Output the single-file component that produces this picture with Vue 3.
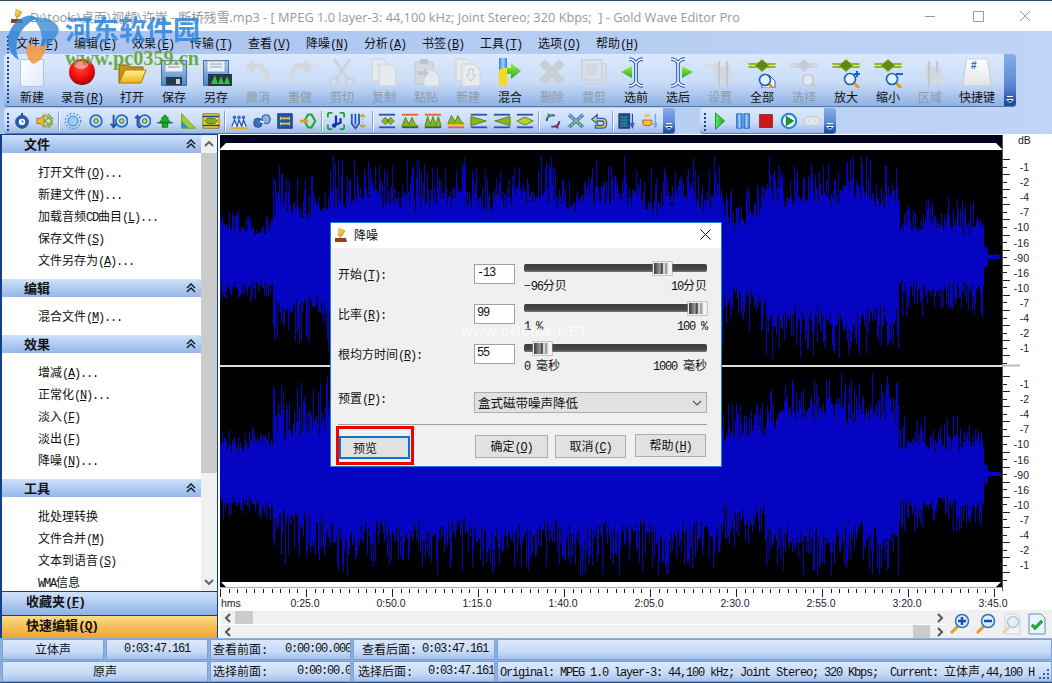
<script setup>
import { h } from 'vue'

// text helper: ascii runs get half-width advance like the bitmap font, (X) is underlined
const T = (props) => {
  const parts = props.t.split(/([\x20-\x7e]+)/).filter(Boolean).map((s) => {
    if (!/^[\x20-\x7e]/.test(s)) return s
    const m = s.match(/^(.*\()([A-Z])(\).*)$/)
    return h('span', { class: 'lat' }, m ? [m[1], h('u', m[2]), m[3]] : s)
  })
  return h('span', parts)
}
T.props = ['t']

const title = 'D:\\tools\\桌面\\视频\\许嵩 - 断桥残雪.mp3 - [ MPEG 1.0 layer-3: 44,100 kHz; Joint Stereo; 320 Kbps;  ] - Gold Wave Editor Pro'
const menus = ['文件(F)', '编辑(E)', '效果(E)', '传输(T)', '查看(V)', '降噪(N)', '分析(A)', '书签(B)', '工具(T)', '选项(O)', '帮助(H)']

const page = (x, y, w, ht, f = '#e6e9ee', s = '#ccd1d8') => `<path d="M${x} ${y}h${w - 6}l6 6v${ht - 6}h-${w}z" fill="${f}" stroke="${s}"/>`
const bars = (c = '#8db52a', d = '#5f8a12') => `<path d="M2.500 8h27M2.500 11h27" stroke="${c}" stroke-width="2.200"/><path d="M16 3.500l7 6-7 6-7-6z" fill="${d}" stroke="${c}"/>`
const mag = (cx, cy, inner = '') => `<path d="M${cx + 4} ${cy + 4}l5 5" stroke="#e59a1c" stroke-width="3"/><circle cx="${cx}" cy="${cy}" r="5.500" fill="#dff0ff" stroke="#1c62b8" stroke-width="1.600"/>${inner}`
const ibeam = '<path d="M9 3c3 0 5 1 7 4 2-3 4-4 7-4M16 7v19M9 30c3 0 5-1 7-4 2 3 4 4 7 4" fill="none" stroke="#1a4fc4" stroke-width="3.600"/><path d="M9 3c3 0 5 1 7 4 2-3 4-4 7-4M16 7v19M9 30c3 0 5-1 7-4 2 3 4 4 7 4" fill="none" stroke="#fff" stroke-width="1.500"/>'
const grayGrid = '<path d="M11 10h16v16H11z" fill="#d3d8de"/><path d="M15 5v26M23 5v26" stroke="#c2c8cf" stroke-width="2"/>'

const big = {
  new: '<path d="M4.500 3.500h23v27h-23z" fill="url(#gPage)" stroke="#a6c6ee"/>',
  rec: '<circle cx="16" cy="16" r="13" fill="url(#gRec)"/><ellipse cx="15" cy="9" rx="7" ry="4" fill="#fff" opacity=".45"/>',
  open: '<path d="M3 27V9h9l2 2h13v5H9L4 27z" fill="#c9940e" stroke="#8a6405"/><path d="M3 27l6-13h21l-5 13z" fill="url(#gFolder)" stroke="#a87a08"/>',
  save: '<path d="M3.500 4.500h25v25h-25z" fill="url(#gFloppy)" stroke="#3f6ea8"/><path d="M7 5h18v11H7z" fill="#eef2f6" stroke="#8ea6c2"/><path d="M10 8h12M10 11h12" stroke="#8a98a8"/><path d="M8 21h16v8H8z" fill="#2c3a48"/><path d="M18 23h4v5h-4z" fill="#c6d3df"/>',
  saveas: '<path d="M3.500 4.500h25v25h-25z" fill="url(#gFloppy)" stroke="#3f6ea8"/><path d="M7 5h18v11H7z" fill="#eef2f6" stroke="#8ea6c2"/><path d="M10 8h12M10 11h12" stroke="#8a98a8"/><path d="M8 18h24v12H8z" fill="#26384a"/><path d="M11 28l4-9 3 9 3-8 3 8 3-8 3 8z" fill="#2fc23a"/>',
  undo: '<path d="M9 11c10-4 18 1 15 16" fill="none" stroke="#d3d8de" stroke-width="5"/><path d="M12 3L3 11l9 8z" fill="#d3d8de"/>',
  redo: '<path d="M23 11c-10-4-18 1-15 16" fill="none" stroke="#d3d8de" stroke-width="5"/><path d="M20 3l9 8-9 8z" fill="#d3d8de"/>',
  cut: '<path d="M8 3l14 20M24 3L10 23" stroke="#ccd1d8" stroke-width="2.500"/><circle cx="8" cy="26" r="4" fill="none" stroke="#ccd1d8" stroke-width="2.500"/><circle cx="24" cy="26" r="4" fill="none" stroke="#ccd1d8" stroke-width="2.500"/>',
  copy: page(4, 3, 17, 22) + page(11, 8, 17, 22),
  paste: '<path d="M5 6h18v22H5z" fill="#d4d9df" stroke="#c2c8cf"/><path d="M10 3h8v5h-8z" fill="#bfc6ce"/>' + page(14, 14, 15, 16) + '<path d="M8 15h6v-3l5 5-5 5v-3H8z" fill="#c2c8cf"/>',
  new2: page(4, 3, 17, 22) + page(10, 8, 18, 22, '#e8ebef') + '<path d="M17 13h4v6h3l-5 6-5-6h3z" fill="none" stroke="#c4cad1"/>',
  mix: '<path d="M5 2h8v13H5z" fill="url(#gBlueBar)"/><path d="M13 12h4V7l10 8-10 8v-5h-4z" fill="url(#gArrow)"/><path d="M5 30V15c0-2 3-3 8-3v18z" fill="#f6dc20"/>',
  del: '<path d="M6 6l20 20M26 6L6 26" stroke="#c8ced5" stroke-width="8"/>',
  crop: '<path d="M8 8h20v20H8z" fill="none" stroke="#cfd4da" stroke-width="2"/><path d="M4 4h20v20H4z" fill="#dfe3e8" fill-opacity=".5" stroke="#cfd4da" stroke-width="2"/><path d="M9 9h10v10H9z" fill="#d3d8de"/>',
  selL: ibeam + '<path d="M12 10v12L1 16z" fill="url(#gArrow)"/>',
  selR: ibeam + '<path d="M20 10v12l11-6z" fill="url(#gArrow)"/>',
  conf: '<path d="M1 8h9V5l6 5-6 5v-3H1z" fill="#d6dbe1"/>' + grayGrid,
  all: bars() + page(16, 19, 13, 13, '#fff', '#2c63b2') + mag(19, 24),
  sel: bars('#ccd1d8', '#c6ccd3') + mag(20, 24).replace(/#e59a1c|#1c62b8/g, '#c4cad1').replace('#dff0ff', '#e5e8ec'),
  zin: bars() + mag(20, 23, '<path d="M24 18h6M27 15v6" stroke="#1c62b8" stroke-width="2"/>'),
  zout: bars() + mag(20, 23, '<path d="M24 18h7" stroke="#1c62b8" stroke-width="2"/>'),
  area: grayGrid + '<path d="M24 15l3 6h6l-5 4 2 6-6-4-6 4 2-6-5-4h6z" fill="#d3d8de"/>',
  key: '<path d="M8 3h16c2 0 3 1 3 3l3 21c0 2-1 3-3 3H5c-2 0-3-1-3-3L5 6c0-2 1-3 3-3z" fill="url(#gKey)" stroke="#c8ccd0"/><text x="10" y="13" font-size="10" font-weight="700" fill="#2a62c0" font-family="Liberation Sans">#</text>',
}

const bigTools = [
  ['新建', 'new'], ['录音(R)', 'rec', 58], ['打开', 'open'], ['保存', 'save'], ['另存', 'saveas'],
  ['撤消', 'undo', 42, 1], ['重做', 'redo', 42, 1], ['剪切', 'cut', 42, 1], ['复制', 'copy', 42, 1], ['粘贴', 'paste', 42, 1],
  ['新建', 'new2', 42, 1], ['混合', 'mix'], ['删除', 'del', 42, 1], ['裁剪', 'crop', 42, 1], ['选前', 'selL'], ['选后', 'selR'],
  ['设置', 'conf', 42, 1], ['全部', 'all'], ['选择', 'sel', 42, 1], ['放大', 'zin'], ['缩小', 'zout'], ['区域', 'area', 42, 1], ['快捷键', 'key', 52],
].map(([label, icon, w = 42, off = 0]) => ({ label, icon: big[icon], w, off }))

const lines = (c1 = '#2d4fb8', c2 = '#2d4fb8') => `<path d="M1 3h18" stroke="${c1}" stroke-width="2"/><path d="M1 17h18" stroke="${c2}" stroke-width="2"/>`
const clock = (cx, extra = '') => `<circle cx="${cx}" cy="10" r="6.500" fill="#bfe0f8" stroke="#1f6fc0" stroke-width="2"/><circle cx="${cx}" cy="10" r="2.500" fill="#e8d23a" stroke="#2a4a9a"/>${extra}`
const small = [
  ['<path d="M10 1v3" stroke="#1b3f90" stroke-width="2"/><circle cx="10" cy="11" r="7" fill="#2a5fb8" stroke="#14357e"/><circle cx="10" cy="11" r="3.500" fill="#fff"/><path d="M10 9v2h2" stroke="#1b3f90" fill="none"/>'],
  ['<path d="M1 7h4l4-4v14l-4-4H1z" fill="#e9b93a" stroke="#9a7410"/><path d="M10 3l8 7-8 7M13 2l6 6M13 18l6-6M10 10l4-4 4 4-4 4z" fill="none" stroke="#7fa61c" stroke-width="1.500"/>'],
  0,
  ['<circle cx="10" cy="10" r="5.500" fill="#9ccdf2" stroke="#2b7fd0"/><circle cx="10" cy="10" r="8.500" fill="none" stroke="#4c94dc" stroke-width="1.600" stroke-dasharray="2 2"/>'],
  [clock(10)],
  [clock(13, '<path d="M4 3v13M1 13l3 4 3-4" fill="none" stroke="#244b9c" stroke-width="2"/>')],
  [clock(13, '<path d="M5 3v11c0 3 2 3 4 3" fill="none" stroke="#244b9c" stroke-width="2"/><path d="M2 6h6" stroke="#244b9c" stroke-width="2"/>')],
  ['<path d="M10 3l4 4h-2l5 5h-4v5h-6v-5H3l5-5H6z" fill="#18b02a" stroke="#0d7a1a"/><path d="M1 12h18" stroke="#0b5a16"/>'],
  ['<path d="M3 2v16h15z" fill="#9fd02c" stroke="#6d9a18"/><path d="M3 2v8l8 8H3z" fill="#2d8fd8"/>'],
  ['<path d="M1 2h18v16H1z" fill="#f2d83a" stroke="#8a6a10"/><path d="M1 5h18M1 15h18" stroke="#1f3f9a" stroke-width="1.500"/><path d="M3 10l3-3h8l3 3-3 3H6z" fill="#7fae1e" stroke="#4b730e"/>'],
  0,
  ['<circle cx="5" cy="6" r="2" fill="#3a6fd0"/><circle cx="10" cy="6" r="2" fill="#3a6fd0"/><circle cx="15" cy="6" r="2" fill="#3a6fd0"/><path d="M2 16l3-7 3 7 2-7 3 7 2-7 3 7" fill="#f4f8ff" stroke="#234fa8" stroke-width="1.400"/><path d="M1 18h18" stroke="#e3b02a" stroke-width="2"/>'],
  ['<rect x="1" y="7" width="9" height="10" rx="4" fill="#3b6fc0" stroke="#1d3f88"/><rect x="10" y="3" width="9" height="10" rx="4" fill="#8cb4e8" stroke="#1d3f88"/><path d="M8 10l4 2" stroke="#fff" stroke-width="2"/>'],
  ['<rect x="2" y="2" width="16" height="16" fill="#2456ae" stroke="#123078"/><path d="M5 7h10M5 13h10" stroke="#e8cf30" stroke-width="2"/><path d="M5 5v4M15 5v4M5 11v4M15 11v4" stroke="#e8cf30"/>'],
  ['<path d="M6 10l4-7h4l4 7-4 7h-4z" fill="none" stroke="#2aa838" stroke-width="2.400"/><path d="M1 10h9" stroke="#e0a020" stroke-width="3"/><path d="M7 7l4 3-4 3z" fill="#e0a020"/>'],
  0,
  ['<path d="M1 1h5M1 1v5M19 1h-5M19 1v5M1 19h5M1 19v-5M19 19h-5M19 19v-5" stroke="#2aa030" stroke-width="2" fill="none"/><path d="M10 4v10l5-2V7" fill="none" stroke="#1230b0" stroke-width="2.500"/><circle cx="8" cy="15" r="2.500" fill="#1230b0"/>'],
  ['<path d="M2 2v11l4 5 4-5V2M6 2v12" fill="none" stroke="#2456b8" stroke-width="2"/><path d="M14 2l3 3h-6zM14 6v3M14 18l3-3h-6zM14 14v-3" fill="#e2ba20" stroke="#a88610" stroke-width=".600"/>'],
  0,
  [lines() + '<path d="M4 10l4-4 4 4-4 4zM10 10l4-4 4 4-4 4z" fill="#8ab820" stroke="#567a10"/>'],
  [lines('#e0662a') + '<path d="M1 16l4-10 4 8 3-8 4 8 3 2z" fill="#8ab820" stroke="#567a10"/>'],
  [lines('#e0662a') + '<path d="M1 16l3-11 3 9 3-9 3 9 3-9 3 11z" fill="#8ab820" stroke="#567a10"/>'],
  ['<path d="M1 13l4-9 4 7 3-7 4 7 3 2z" fill="#8ab820" stroke="#567a10"/><path d="M1 14h18" stroke="#e5c020" stroke-width="2"/><path d="M1 17h18" stroke="#e0662a" stroke-width="2"/>'],
  [lines() + '<path d="M1 5l17 5-17 5z" fill="#8ab820" stroke="#567a10"/>'],
  [lines() + '<path d="M19 5L2 10l17 5z" fill="#8ab820" stroke="#567a10"/>'],
  [lines() + '<path d="M1 10l8-4h2l8 4-8 4H9z" fill="#b6d034" stroke="#567a10"/>'],
  0,
  ['<path d="M3 10c0-5 4-7 9-6M17 10c0 5-4 7-9 6" fill="none" stroke="#2456b8" stroke-width="2.200"/><path d="M4 1l5 3-5 3z" fill="#2aa030"/><path d="M16 13l-5 3 5 3z" fill="#b02030"/>'],
  ['<path d="M2 3l16 14M18 3L2 17" stroke="#3f86dc" stroke-width="4"/><path d="M2 3l16 14M18 3L2 17" stroke="#f0d040" stroke-width="1.400" stroke-dasharray="2 2"/>'],
  ['<path d="M8 3L2 8l6 5v-3h5c3 0 3 5 0 5H6v3h8c6 0 6-11 0-11H8z" fill="#f0cc30" stroke="#2a60c0" stroke-width="1.400"/>'],
  0,
  ['<rect x="1" y="2" width="12" height="16" fill="#1f4f9c" stroke="#122f6a"/><path d="M3 6h8M3 9h8M3 12h8M3 15h8" stroke="#2fc04a" stroke-dasharray="1 1" stroke-width="2"/><path d="M16 2v12M14 12l2 5 2-5" fill="#fff" stroke="#234fa8" stroke-width="1.400"/>'],
  ['<path d="M2 9h10v4c0 3-10 3-10 0z" fill="#f0c43a" stroke="#c04a20"/><path d="M4 2l3 3 3-3M4 6l3-3 3 3" fill="none" stroke="#e0a020"/><path d="M16 2v12M14 12l2 5 2-5" fill="none" stroke="#7aa0dc" stroke-width="1.400"/>'],
]

const transport = [
  '<path d="M5 1l10 9-10 9z" fill="url(#gPlay)" stroke="#0c8a20"/>',
  '<rect x="3" y="2" width="6" height="16" fill="url(#gBlueBar)" stroke="#2a66b8"/><rect x="11" y="2" width="6" height="16" fill="url(#gBlueBar)" stroke="#2a66b8"/>',
  '<rect x="3" y="3" width="14" height="14" fill="#d01818" stroke="#8a1010"/>',
  '<circle cx="10" cy="10" r="8" fill="#fff" stroke="#2a86d8" stroke-width="2.400"/><path d="M7 5l8 5-8 5z" fill="#12a028" stroke="#0a6a18"/>',
  '<rect x="1" y="5" width="18" height="10" rx="5" fill="#d5dce6" stroke="#c4cbd6"/><circle cx="6.500" cy="10" r="3" fill="none" stroke="#e8edf3" stroke-width="1.500"/><circle cx="13.500" cy="10" r="3" fill="none" stroke="#e8edf3" stroke-width="1.500"/>',
]

const sections = [
  { title: '文件', items: ['打开文件(O)...', '新建文件(N)...', '加载音频CD曲目(L)...', '保存文件(S)', '文件另存为(A)...'] },
  { title: '编辑', items: ['混合文件(M)...'] },
  { title: '效果', items: ['增减(A)...', '正常化(N)...', '淡入(F)', '淡出(F)', '降噪(N)...'] },
  { title: '工具', items: ['批处理转换', '文件合并(M)', '文本到语音(S)', 'WMA信息'] },
]

// loudness outline of the song: [from x, solid half height, peak half height]
const outline = [[0, 28, 46], [53, 44, 92], [106, 56, 101], [504, 38, 74], [546, 60, 101], [679, 28, 60], [764, 9, 12], [768, 2, 3]]
const outlineAt = (x) => {
  let seg = outline[0]
  for (const o of outline) if (x >= o[0]) seg = o
  return seg
}

// waveform columns, seeded so every run looks the same
function makeWave(seed) {
  let s = seed
  const rnd = () => {
    s = (s * 1664525 + 1013904223) >>> 0
    return s / 4294967296
  }
  const mid = 107
  const col = (x) => {
    const [, solid, peak] = outlineAt(x)
    const wob = 1 + 0.13 * Math.sin(x / 9 + seed) * Math.sin(x / 31)
    const a = solid * wob * (0.82 + 0.3 * rnd()) + Math.pow(rnd(), 2.2) * (peak - solid)
    return Math.min(peak, a)
  }
  let d = ''
  for (let x = 0; x < 780; x++) {
    d += `M${x + 0.5} ${Math.round(mid - col(x))}V${Math.round(mid + col(x))}`
  }
  return d
}
const waveTop = makeWave(7)
const waveBottom = makeWave(91)

const timeLabels = ['0:25.0', '0:50.0', '1:15.0', '1:40.0', '2:05.0', '2:30.0', '2:55.0', '3:20.0', '3:45.0']
const ticks = Array.from({ length: 91 }, (_, i) => ({ x: Math.round(i * 8.6) + 0.5, major: i % 10 === 0 }))

const dbValues = ['-1', '-2', '-4', '-7', '-10', '-16', '-90', '-16', '-10', '-7', '-4', '-2', '-1']
const dbLabels = [33, 250].flatMap((top) => dbValues.map((v, i) => ({ v, y: Math.round(top + i * 15.1) })))
const dbTicks = [25, 242].flatMap((top) => Array.from({ length: 28 }, (_, i) => ({ y: Math.round(top + i * 7.55) + 0.5, long: i % 2 === 0 })))

const sliders = [
  { label: '开始(T):', value: '-13', pos: 70.5, from: '−96分贝', to: '10分贝' },
  { label: '比率(R):', value: '99', pos: 89.5, from: '1 %', to: '100 %' },
  { label: '根均方时间(R):', value: '55', pos: 4.9, from: '0 毫秒', to: '1000 毫秒' },
]
</script>

<template>
  <div class="app">
    <svg class="defs" width="0" height="0">
      <defs>
        <linearGradient id="gPage" x1="0" y1="0" x2="1" y2="1"><stop offset="0" stop-color="#fff" /><stop offset="1" stop-color="#dfeafa" /></linearGradient>
        <radialGradient id="gRec" cx=".45" cy=".35" r=".7"><stop offset="0" stop-color="#ff4a3a" /><stop offset=".6" stop-color="#ee0c0c" /><stop offset="1" stop-color="#8a0606" /></radialGradient>
        <linearGradient id="gFolder" x1="0" y1="0" x2="0" y2="1"><stop offset="0" stop-color="#fff2a0" /><stop offset="1" stop-color="#eeb40c" /></linearGradient>
        <linearGradient id="gFloppy" x1="0" y1="0" x2="0" y2="1"><stop offset="0" stop-color="#a8cdf2" /><stop offset="1" stop-color="#4f86c8" /></linearGradient>
        <linearGradient id="gBlueBar" x1="0" y1="0" x2="1" y2="0"><stop offset="0" stop-color="#2f7fe0" /><stop offset=".5" stop-color="#9fd0fa" /><stop offset="1" stop-color="#2f7fe0" /></linearGradient>
        <linearGradient id="gArrow" x1="0" y1="0" x2="0" y2="1"><stop offset="0" stop-color="#a6ee3a" /><stop offset="1" stop-color="#1fa83a" /></linearGradient>
        <linearGradient id="gKey" x1="0" y1="0" x2="0" y2="1"><stop offset="0" stop-color="#fff" /><stop offset="1" stop-color="#e0e3e6" /></linearGradient>
        <linearGradient id="gPlay" x1="0" y1="0" x2="1" y2="0"><stop offset="0" stop-color="#5cf05c" /><stop offset="1" stop-color="#0ca822" /></linearGradient>
        <linearGradient id="gGold" x1="0" y1="0" x2="1" y2="1"><stop offset="0" stop-color="#ffe468" /><stop offset="1" stop-color="#d8a010" /></linearGradient>
      </defs>
    </svg>

    <header class="titlebar">
      <svg class="app-icon" viewBox="0 0 16 16" width="16" height="16">
        <path d="M7 1l6 3-3 5-4-1z" fill="url(#gGold)" stroke="#c08c10" stroke-width=".5" />
        <path d="M8 8v3" stroke="#a87a10" />
        <path d="M2 11h11l1 4H2z" fill="#9a3c1e" />
      </svg>
      <span class="title-text">{{ title }}</span>
      <div class="win-btns">
        <svg width="46" height="30" viewBox="0 0 46 30"><path d="M14 15.500h10" stroke="#999" /></svg>
        <svg width="46" height="30" viewBox="0 0 46 30"><path d="M16.500 10.500h10v10h-10z" fill="none" stroke="#999" /></svg>
        <svg width="46" height="30" viewBox="0 0 46 30"><path d="M17 10l10 10M27 10L17 20" stroke="#999" /></svg>
      </div>
    </header>

    <div class="bars">
      <nav class="menubar">
        <i class="grip"></i>
        <span v-for="m in menus" :key="m" class="menu-item"><T :t="m" /></span>
      </nav>

      <div class="toolbar big">
        <i class="grip"></i>
        <div v-for="t in bigTools" :key="t.label + t.icon" class="tool" :class="{ off: t.off }" :style="{ width: t.w + 'px' }">
          <svg viewBox="0 0 32 32" width="32" height="32" v-html="t.icon"></svg>
          <T :t="t.label" />
        </div>
        <div class="more">
          <svg width="8" height="7" viewBox="0 0 8 7"><path d="M1 .5h6" stroke="#fff" /><path d="M0 3h8L4 7z" fill="#fff" /><path d="M2 4h4L4 6z" fill="#111" /></svg>
        </div>
      </div>

      <div class="small-row">
        <div class="toolbar thin first">
          <i class="grip"></i>
          <template v-for="(s, i) in small" :key="i">
            <i v-if="!s" class="sep"></i>
            <span v-else class="mini"><svg viewBox="0 0 20 20" width="18" height="18" v-html="s[0]"></svg></span>
          </template>
          <div class="more">
            <svg width="8" height="7" viewBox="0 0 8 7"><path d="M1 .5h6" stroke="#fff" /><path d="M0 3h8L4 7z" fill="#fff" /><path d="M2 4h4L4 6z" fill="#111" /></svg>
          </div>
        </div>
        <div class="toolbar thin second">
          <i class="grip"></i>
          <span v-for="(s, i) in transport" :key="i" class="mini wide"><svg viewBox="0 0 20 20" width="18" height="18" v-html="s"></svg></span>
          <div class="more">
            <svg width="8" height="7" viewBox="0 0 8 7"><path d="M1 .5h6" stroke="#fff" /><path d="M0 3h8L4 7z" fill="#fff" /><path d="M2 4h4L4 6z" fill="#111" /></svg>
          </div>
        </div>
      </div>
    </div>

    <main class="main">
      <aside class="side">
        <div class="tasks">
          <div class="task-list">
            <section v-for="sec in sections" :key="sec.title">
              <h3 class="task-head">
                {{ sec.title }}
                <svg width="10" height="10" viewBox="0 0 10 10"><path d="M1 5l4-4 4 4M1 9l4-4 4 4" fill="none" stroke="#111" stroke-width="1.300" /></svg>
              </h3>
              <ul class="task-items">
                <li v-for="it in sec.items" :key="it"><T :t="it" /></li>
              </ul>
            </section>
          </div>
          <div class="vscroll">
            <span class="vbtn"><svg width="10" height="6" viewBox="0 0 10 6"><path d="M1 5l4-4 4 4" fill="none" stroke="#666" stroke-width="2" /></svg></span>
            <span class="vthumb"></span>
            <span class="vtrack"></span>
            <span class="vbtn"><svg width="10" height="6" viewBox="0 0 10 6"><path d="M1 1l4 4 4-4" fill="none" stroke="#666" stroke-width="2" /></svg></span>
          </div>
        </div>
        <div class="fold blue"><T t="收藏夹(F)" /></div>
        <div class="fold orange"><T t="快速编辑(Q)" /></div>
      </aside>

      <div class="right">
        <div class="scope">
          <div class="wave-col">
            <div class="navy"></div>
            <div class="strip top-strip"></div>
            <svg class="channel" width="782" height="215" viewBox="0 0 782 215" shape-rendering="crispEdges"><path :d="waveTop" stroke="#0404c2" stroke-width="1" /></svg>
            <div class="divider"></div>
            <svg class="channel" width="782" height="215" viewBox="0 0 782 215" shape-rendering="crispEdges"><path :d="waveBottom" stroke="#0404c2" stroke-width="1" /></svg>
            <div class="strip bottom-strip"></div>
            <svg class="ruler" width="782" height="22" viewBox="0 0 782 22">
              <path v-for="t in ticks" :key="t.x" :d="`M${t.x} 1v${t.major ? 8 : 4}`" stroke="#222" />
              <text x="1" y="19" class="rt">hms</text>
              <text v-for="(l, i) in timeLabels" :key="l" :x="86 * (i + 1) - 1" y="19" class="rt" text-anchor="middle">{{ l }}</text>
            </svg>
          </div>
          <svg class="db" width="50" height="476" viewBox="0 0 50 476">
            <path d="M.5 1v456" stroke="#555" />
            <path d="M0 231.500h18" stroke="#bbb" stroke-width="2" />
            <path v-for="t in dbTicks" :key="t.y" :d="`M1 ${t.y}h${t.long ? 7 : 4}`" stroke="#222" />
            <text x="16" y="10" class="dt">dB</text>
            <text v-for="(d, i) in dbLabels" :key="i" x="27" :y="d.y + 4" class="dt" text-anchor="end">{{ d.v }}</text>
          </svg>
        </div>

        <div class="scroll-zone">
          <div class="hscrolls">
            <div class="hscroll">
              <svg width="8" height="10" viewBox="0 0 8 10"><path d="M6 1L2 5l4 4" fill="none" stroke="#555" stroke-width="2" /></svg>
              <span class="hthumb first"></span>
              <span class="hspace"></span>
              <svg width="8" height="10" viewBox="0 0 8 10"><path d="M2 1l4 4-4 4" fill="none" stroke="#555" stroke-width="2" /></svg>
            </div>
            <div class="hscroll">
              <svg width="8" height="10" viewBox="0 0 8 10"><path d="M6 1L2 5l4 4" fill="none" stroke="#555" stroke-width="2" /></svg>
              <span class="hspace"></span>
              <span class="hthumb last"></span>
              <svg width="8" height="10" viewBox="0 0 8 10"><path d="M2 1l4 4-4 4" fill="none" stroke="#555" stroke-width="2" /></svg>
            </div>
          </div>
          <div class="zoom-btns">
            <svg width="22" height="22" viewBox="0 0 22 22"><path d="M10 13l-7 7" stroke="#e69a24" stroke-width="3" /><circle cx="14" cy="8" r="6.500" fill="#d8ecfb" stroke="#2a74c4" stroke-width="1.500" /><path d="M10 8h8M14 4v8" stroke="#1450a8" stroke-width="2.500" /></svg>
            <svg width="22" height="22" viewBox="0 0 22 22"><path d="M10 13l-7 7" stroke="#e69a24" stroke-width="3" /><circle cx="14" cy="8" r="6.500" fill="#d8ecfb" stroke="#2a74c4" stroke-width="1.500" /><path d="M10 8h8" stroke="#1450a8" stroke-width="2.500" /></svg>
            <svg width="22" height="22" viewBox="0 0 22 22" opacity=".55"><path d="M5 1h11l4 4v16H5z" fill="#f4f7fb" stroke="#a9c0dc" /><path d="M9 14l-6 6" stroke="#e0b878" stroke-width="3" /><circle cx="13" cy="9" r="5.500" fill="#e3eff9" stroke="#7fa6cf" stroke-width="1.500" /></svg>
            <svg width="22" height="22" viewBox="0 0 22 22"><path d="M3 1h12l4 4v16H3z" fill="#eaf2fb" stroke="#5d8fc8" /><path d="M5 13l4 4 8-8-2-2-6 6-2-2z" fill="#22b030" stroke="#12801e" stroke-width=".5" /></svg>
          </div>
        </div>
      </div>
    </main>

    <footer class="status">
      <div class="st-row">
        <span class="cell center w102">立体声</span>
        <span class="cell center w102 lat">0:03:47.161</span>
        <span class="cell w141 pl3"><span class="lb l72"><T t="查看前面:" /></span><span class="lat">0:00:00.000</span></span>
        <span class="cell w142 pl9"><span class="lb l60"><T t="查看后面:" /></span><span class="lat">0:03:47.161</span></span>
        <span class="cell grow"></span>
      </div>
      <div class="st-row">
        <span class="cell center w206">原声</span>
        <span class="cell w141 pl3"><span class="lb l84"><T t="选择前面:" /></span><span class="lat">0:00:00.000</span></span>
        <span class="cell w142 pl5"><span class="lb l70"><T t="选择后面:" /></span><span class="lat">0:03:47.161</span></span>
        <span class="cell grow pl3"><T t="Original: MPEG 1.0 layer-3: 44,100 kHz; Joint Stereo; 320 Kbps;  Current: 立体声,44,100 H" /></span>
      </div>
      <svg class="size-grip" width="11" height="11" viewBox="0 0 11 11"><path d="M8 1h2v2H8zM4 5h2v2H4zM8 5h2v2H8zM0 9h2v2H0zM4 9h2v2H4zM8 9h2v2H8z" fill="#3a6096" /></svg>
    </footer>

    <!-- dialog floats over the wave -->
    <div class="dialog">
      <div class="dlg-title">
        <svg viewBox="0 0 16 16" width="16" height="16">
          <path d="M6 1l6 3-3 5-4-1z" fill="url(#gGold)" stroke="#c08c10" stroke-width=".5" />
          <path d="M7 8v3" stroke="#a87a10" />
          <path d="M2 11h11l1 4H2z" fill="#9a3c1e" />
        </svg>
        <span>降噪</span>
        <svg class="dlg-close" width="11" height="11" viewBox="0 0 11 11"><path d="M.5.5l10 10M10.500.5l-10 10" stroke="#111" /></svg>
      </div>
      <div class="dlg-body">
        <div v-for="s in sliders" :key="s.label" class="dlg-row">
          <label class="dlg-label"><T :t="s.label" /></label>
          <span class="edit lat">{{ s.value }}</span>
          <div class="slider">
            <div class="track"><span class="thumb" :style="{ left: s.pos + '%' }"></span></div>
            <div class="ends"><T :t="s.from" /><T :t="s.to" /></div>
          </div>
        </div>
        <div class="dlg-row preset">
          <label class="dlg-label"><T t="预置(P):" /></label>
          <div class="select">
            盒式磁带噪声降低
            <svg width="10" height="6" viewBox="0 0 10 6"><path d="M1 1l4 4 4-4" fill="none" stroke="#555" stroke-width="1.200" /></svg>
          </div>
        </div>
        <div class="dlg-line"></div>
        <div class="dlg-btns">
          <span class="btn preview">预览</span>
          <span class="btn ok"><T t="确定(O)" /></span>
          <span class="btn cancel"><T t="取消(C)" /></span>
          <span class="btn help"><T t="帮助(H)" /></span>
        </div>
      </div>
      <span class="mark-home">www.pHome.NET</span>
      <span class="red-box"></span>
    </div>

    <!-- site watermark over the top left corner -->
    <div class="wm">
      <svg class="wm-logo" width="60" height="56" viewBox="0 0 60 56">
        <path d="M24 4C10 8 2 22 6 36c2 6 6 10 10 12C10 34 14 16 34 6c-3-2-6-3-10-2z" fill="#2f86d6" opacity=".85" />
        <path d="M30 6c12-2 24 2 26 12-3 10-12 18-22 22 6-8 8-20-4-34z" fill="#2f86d6" opacity=".75" />
        <path d="M24 32c8 2 14 4 20 0-2 10-6 18-14 20-6-4-8-12-6-20z" fill="#ee9c4a" opacity=".9" />
      </svg>
      <span class="wm-cn">河东软件园</span>
      <span class="wm-en">www.pc0359.cn</span>
    </div>
  </div>
</template>

<style scoped>
.app {
  position: relative;
  width: 1052px;
  height: 683px;
  display: flex;
  flex-direction: column;
  overflow: hidden;
  background: #fff;
  color: #111;
  font-family: "Noto Sans CJK SC", "Liberation Sans", sans-serif;
  font-size: 12px;
}
.defs {
  position: absolute;
}

.titlebar {
  height: 31px;
  flex: none;
  box-sizing: border-box;
  border-top: 1px solid #2f4a68;
  display: flex;
  align-items: center;
  background: #fff;
}
.app-icon {
  margin-left: 9px;
  margin-top: -1px;
}
.title-text {
  margin-left: 5px;
  font-family: "Open Sans", "Noto Sans CJK SC", sans-serif;
  font-size: 12.800px;
  color: #999;
  white-space: pre;
}
.win-btns {
  margin-left: auto;
  display: flex;
  padding-right: 3px;
}

.bars {
  flex: none;
  height: 103px;
  background: linear-gradient(90deg, #a9c3ef, #c0d5f6);
}
.grip {
  display: block;
  flex: none;
  width: 2px;
  height: calc(100% - 6px);
  margin: 3px 0 0 2px;
  background: repeating-linear-gradient(to bottom, #1c4290 0 2px, transparent 2px 4px);
}
.menubar {
  height: 23px;
  display: flex;
  align-items: center;
  padding-left: 5px;
}
.menu-item {
  width: 58px;
  flex: none;
  padding-left: 7px;
  box-sizing: border-box;
  white-space: nowrap;
}

.toolbar {
  display: flex;
  box-sizing: border-box;
  border-bottom: 1px solid #5577aa;
  border-radius: 4px 3px 3px 4px;
  background: linear-gradient(to bottom, #dce9fc 0, #c9dcf8 55%, #8fb1e2 100%);
}
.big {
  height: 53px;
  width: 1012px;
  margin-left: 4px;
  padding-left: 1px;
}
.tool {
  flex: none;
  display: flex;
  flex-direction: column;
  align-items: center;
  padding-top: 2px;
  line-height: 14px;
  white-space: nowrap;
}
.big .grip + .tool {
  margin-left: 2px;
}
.tool svg {
  margin-bottom: 2px;
}
.off {
  color: #8f9aa8;
}
.more {
  margin-left: auto;
  width: 12px;
  flex: none;
  display: flex;
  align-items: flex-end;
  justify-content: center;
  padding-bottom: 3px;
  box-sizing: border-box;
  border-radius: 0 3px 3px 0;
  background: linear-gradient(to bottom, #86ade9, #5b88d4 60%, #16469c);
}

.small-row {
  display: flex;
  margin-top: 1px;
}
.thin {
  height: 26px;
  align-items: center;
  background: linear-gradient(to bottom, #dde9fc, #c8dbf7 60%, #9cbae8);
}
.thin .more {
  align-self: stretch;
}
.first {
  margin-left: 4px;
  width: 671px;
  padding-left: 1px;
}
.first .grip + * {
  margin-left: 1px;
}
.second {
  margin-left: 25px;
  width: 136px;
  padding-left: 2px;
}
.second .grip + * {
  margin-left: 2px;
}
.mini {
  width: 23px;
  flex: none;
  display: flex;
  justify-content: center;
}
.sep {
  display: block;
  width: 1px;
  height: 20px;
  margin: 0 2px;
  background: #7f9fd0;
  box-shadow: 1px 0 #fff;
}

.main {
  flex: none;
  height: 504px;
  display: flex;
}
.side {
  width: 218px;
  flex: none;
  box-sizing: border-box;
  border: solid #123f8a;
  border-width: 1px 1px 0 2px;
  display: flex;
  flex-direction: column;
}
.tasks {
  height: 456px;
  display: flex;
  overflow: hidden;
  flex: none;
}
.task-list {
  flex: 1;
  min-width: 0;
}
.task-head {
  margin: 0;
  height: 18px;
  display: flex;
  align-items: center;
  justify-content: space-between;
  padding: 0 5px 0 22px;
  font-size: 13px;
  font-weight: 700;
  line-height: 18px;
  background: linear-gradient(to bottom, #cde1f9, #93b6e8);
}
.task-items {
  list-style: none;
  margin: 0;
  padding: 8px 0;
}
.task-items li {
  height: 22px;
  line-height: 22px;
  padding-left: 36px;
  white-space: nowrap;
}
.vscroll {
  width: 16px;
  flex: none;
  display: flex;
  flex-direction: column;
  background: #f0f0f0;
}
.vbtn {
  height: 18px;
  display: flex;
  align-items: center;
  justify-content: center;
  flex: none;
}
.vthumb {
  height: 320px;
  background: #cbcbcb;
  flex: none;
}
.vtrack {
  flex: 1;
}
.fold {
  height: 24px;
  flex: none;
  box-sizing: border-box;
  padding: 0 0 3px 24px;
  display: flex;
  align-items: center;
  line-height: 14px;
  font-size: 13px;
  font-weight: 700;
  border-top: 1px solid #123f8a;
}
.blue {
  background: linear-gradient(to bottom, #d0e2fa, #8fb2e6);
}
.orange {
  background: linear-gradient(to bottom, #fbdc86, #eda02e);
}

.right {
  flex: 1;
  min-width: 0;
  margin-left: 2px;
  display: flex;
  flex-direction: column;
}
.scope {
  height: 476px;
  flex: none;
  display: flex;
}
.wave-col {
  width: 782px;
  flex: none;
  padding-top: 1px;
  box-sizing: border-box;
}
.navy {
  height: 8px;
  background: #00001e;
}
.strip {
  position: relative;
  background: #fff;
}
.top-strip {
  height: 7px;
}
.top-strip::before,
.top-strip::after,
.bottom-strip::before,
.bottom-strip::after {
  content: "";
  position: absolute;
  width: 0;
  height: 0;
  border: 3px solid transparent;
}
.top-strip::before {
  left: 0;
  top: 0;
  border-left-color: #000;
  border-top-color: #000;
}
.top-strip::after {
  right: 0;
  top: 0;
  border-right-color: #000;
  border-top-color: #000;
}
.bottom-strip {
  height: 6px;
  border-bottom: 1px solid #aaa;
  box-sizing: border-box;
}
.bottom-strip::before {
  left: 0;
  bottom: 0;
  border-left-color: #000;
  border-bottom-color: #000;
}
.bottom-strip::after {
  right: 0;
  bottom: 0;
  border-right-color: #000;
  border-bottom-color: #000;
}
.channel {
  display: block;
  background: #000;
}
.divider {
  height: 2px;
  background: #ddd;
}
.ruler {
  display: block;
  overflow: visible;
}
.rt,
.dt {
  font-family: "Liberation Sans", sans-serif;
  font-size: 10.500px;
  fill: #223;
}
.db {
  flex: none;
}

.scroll-zone {
  flex: 1;
  display: flex;
  min-height: 0;
}
.hscrolls {
  flex: 1;
  min-width: 0;
  display: flex;
  flex-direction: column;
  gap: 1px;
  padding-top: 1px;
}
.hscroll {
  flex: 1;
  display: flex;
  align-items: center;
  padding: 0 5px 0 4px;
  background: #f0f0f0;
}
.hspace {
  flex: 1;
}
.hthumb {
  width: 17px;
  height: 13px;
  background: #cbcbcb;
  flex: none;
}
.hthumb.first {
  margin-left: 3px;
}
.hthumb.last {
  margin-right: 6px;
}
.zoom-btns {
  width: 104px;
  flex: none;
  box-sizing: border-box;
  display: flex;
  align-items: center;
  gap: 4px;
  margin-left: -1px;
  background: #f0f0f0;
}

.status {
  position: relative;
  flex: none;
  height: 45px;
  box-sizing: border-box;
  border-bottom: 1px solid #2a4a80;
  display: flex;
  flex-direction: column;
  gap: 1px;
  padding: 1px 0 0 2px;
  background: #8eaedc;
}
.st-row {
  flex: 1;
  display: flex;
  gap: 2px;
  min-height: 0;
}
.cell {
  display: flex;
  align-items: center;
  flex: none;
  box-sizing: border-box;
  overflow: hidden;
  white-space: pre;
  padding-bottom: 2px;
  border: 1px solid #7da2d8;
  background: linear-gradient(to bottom, #dbe8fb, #c8dbf7 60%, #a5c1ec);
}
.center {
  justify-content: center;
}
.w102 { width: 102px; }
.w206 { width: 206px; }
.w141 { width: 141px; }
.w142 { width: 142px; }
.grow { flex: 1; min-width: 0; }
.pl3 { padding-left: 2px; }
.pl5 { padding-left: 4px; }
.pl9 { padding-left: 8px; }
.lb { flex: none; display: block; }
.l60 { width: 60px; }
.l70 { width: 70px; }
.l72 { width: 72px; }
.l84 { width: 84px; }
.size-grip {
  position: absolute;
  right: 2px;
  bottom: 3px;
}

.dialog {
  position: absolute;
  left: 330px;
  top: 222px;
  width: 392px;
  height: 245px;
  box-sizing: border-box;
  border: 1px solid #1a7ed8;
  background: #f0f0f0;
  display: flex;
  flex-direction: column;
}
.dlg-title {
  height: 25px;
  flex: none;
  display: flex;
  align-items: center;
  gap: 5px;
  padding: 0 0 2px 2px;
  box-sizing: border-box;
  background: #fff;
}
.dlg-close {
  margin-left: auto;
  margin-right: 10px;
}
.dlg-body {
  flex: 1;
  padding: 16px 14px 0 7px;
  display: flex;
  flex-direction: column;
}
.dlg-row {
  display: flex;
  height: 40px;
  flex: none;
}
.dlg-label {
  width: 136px;
  flex: none;
  line-height: 19px;
  white-space: nowrap;
}
.edit {
  width: 41px;
  height: 20px;
  flex: none;
  box-sizing: border-box;
  border: 1px solid #a0a0a0;
  background: #fff;
  padding-left: 2px;
  line-height: 16px;
}
.slider {
  margin-left: 9px;
  width: 183px;
  flex: none;
}
.track {
  position: relative;
  height: 8px;
  border-radius: 2px;
  background: linear-gradient(to bottom, #3c3c3c, #4a4a4a 70%, #777);
}
.thumb {
  position: absolute;
  top: -2px;
  width: 19px;
  height: 13px;
  box-sizing: border-box;
  border: 1px solid #f0f0f0;
  box-shadow: 0 0 0 .5px #999;
  background: linear-gradient(90deg, #3a3a3a, #9a9a9a 35%, #333 48%, #fafafa 58%, #888 70%, #f4f4f4 86%);
}
.ends {
  display: flex;
  justify-content: space-between;
  margin-top: 6px;
  line-height: 14px;
  white-space: pre;
}
.preset {
  margin-top: 8px;
  height: 20px;
}
.preset .dlg-label {
  line-height: 12px;
}
.select {
  width: 233px;
  height: 21px;
  box-sizing: border-box;
  border: 1px solid #adadad;
  background: #e1e1e1;
  display: flex;
  align-items: center;
  justify-content: space-between;
  padding: 0 4px 0 3px;
  font-size: 12.500px;
}
.dlg-line {
  height: 1px;
  margin-top: 12px;
  background: #a0a0a0;
}
.dlg-btns {
  display: flex;
  align-items: flex-start;
  margin-top: 10px;
}
.btn {
  height: 23px;
  flex: none;
  box-sizing: border-box;
  border: 1px solid #adadad;
  background: #e1e1e1;
  display: flex;
  align-items: center;
  justify-content: center;
  padding-bottom: 1px;
  white-space: nowrap;
}
.preview {
  width: 71px;
  margin: 1px 0 0 1px;
  border: 2px solid #0078d7;
  justify-content: flex-start;
  padding-left: 12px;
}
.ok {
  width: 73px;
  margin-left: 65px;
}
.cancel {
  width: 71px;
  margin-left: 7px;
}
.help {
  width: 71px;
  margin-left: 9px;
  margin-top: -1px;
}
.mark-home {
  position: absolute;
  left: 130px;
  top: 100px;
  font-family: "Liberation Sans", sans-serif;
  font-size: 14.500px;
  font-weight: 700;
  letter-spacing: .6px;
  color: rgba(255, 255, 255, .55);
  pointer-events: none;
}
.red-box {
  position: absolute;
  left: 5px;
  top: 203px;
  width: 78px;
  height: 39px;
  box-sizing: border-box;
  border: 3px solid #f00000;
}

.wm {
  position: absolute;
  left: 0;
  top: 0;
  width: 220px;
  height: 70px;
  pointer-events: none;
}
.wm-logo {
  position: absolute;
  left: 3px;
  top: 12px;
}
.wm-cn {
  position: absolute;
  left: 65px;
  top: 11px;
  font-size: 27px;
  font-weight: 700;
  line-height: 36px;
  color: rgba(50, 135, 220, .88);
  white-space: nowrap;
}
.wm-en {
  position: absolute;
  left: 65px;
  top: 47px;
  font-family: "Liberation Serif", serif;
  font-size: 20.300px;
  font-weight: 700;
  line-height: 22px;
  color: rgba(88, 160, 40, .85);
  white-space: nowrap;
}
</style>

<style>
.lat {
  font-family: "Liberation Mono", monospace;
  letter-spacing: -1.2px;
}
.lat u {
  text-underline-offset: 1px;
}
</style>
